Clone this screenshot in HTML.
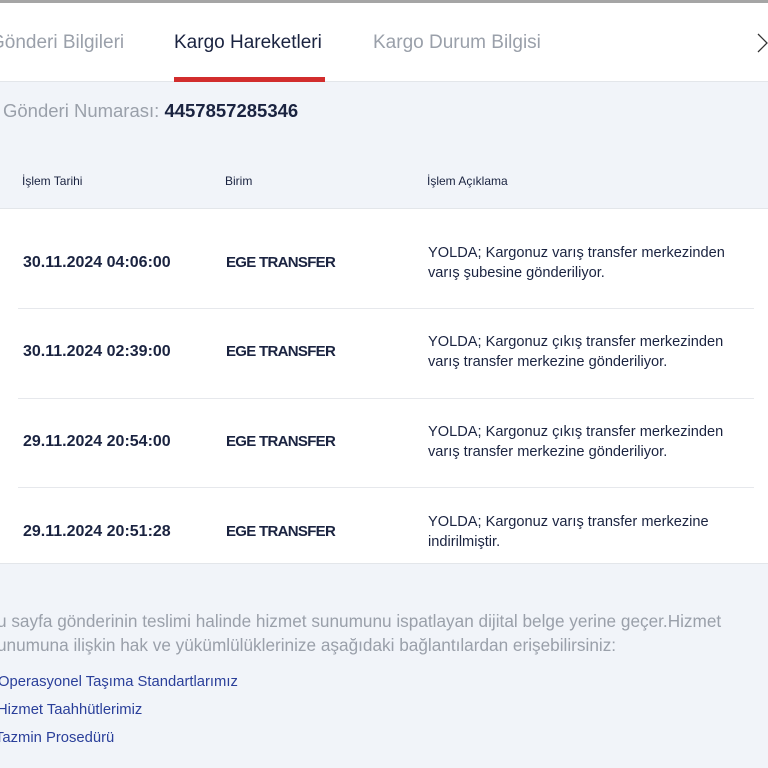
<!DOCTYPE html>
<html><head><meta charset="utf-8"><style>
*{margin:0;padding:0;box-sizing:border-box}
body{width:768px;height:768px;overflow:hidden;background:#f1f4f9;font-family:"Liberation Sans",sans-serif;position:relative;color:#1a2340}
.a{position:absolute;white-space:nowrap}
.d{font-size:16px;font-weight:bold}
.e{font-size:15px;font-weight:bold;letter-spacing:-0.7px}
.t{font-size:14.6px;line-height:20px}
</style></head><body>
<div class="a" style="left:0;top:0;width:768px;height:3px;background:#a5a5a5"></div>
<div class="a" style="left:0;top:3px;width:768px;height:79px;background:#fff;border-bottom:1px solid #e3e6ea"></div>
<div class="a" style="left:-10px;top:32px;font-size:19px;color:#9aa0aa">Gönderi Bilgileri</div>
<div class="a" style="left:174px;top:32px;font-size:19px;color:#1a2340">Kargo Hareketleri</div>
<div class="a" style="left:373px;top:32px;font-size:19px;color:#9aa0aa">Kargo Durum Bilgisi</div>
<div class="a" style="left:174px;top:77px;width:151px;height:5px;background:#d22d2d"></div>
<svg class="a" style="left:756px;top:32px" width="14" height="22"><path d="M2 2L11 11L2 20" fill="none" stroke="#333" stroke-width="1.3"/></svg>
<div class="a" style="left:3px;top:100px;font-size:18.5px;color:#9aa0aa">Gönderi Numarası: <b style="color:#1a2340">4457857285346</b></div>
<div class="a" style="left:22px;top:174px;font-size:12px">İşlem Tarihi</div>
<div class="a" style="left:225px;top:174px;font-size:12px">Birim</div>
<div class="a" style="left:427px;top:174px;font-size:12px">İşlem Açıklama</div>
<div class="a" style="left:0;top:208px;width:768px;height:356px;background:#fff;border-top:1px solid #e3e6ea;border-bottom:1px solid #e3e6ea"></div>
<div class="a" style="left:18px;top:308px;width:736px;height:1px;background:#e6e8ec"></div>
<div class="a" style="left:18px;top:398px;width:736px;height:1px;background:#e6e8ec"></div>
<div class="a" style="left:18px;top:487px;width:736px;height:1px;background:#e6e8ec"></div>
<div class="a d" style="left:23px;top:254px">30.11.2024 04:06:00</div>
<div class="a e" style="left:226px;top:254px">EGE TRANSFER</div>
<div class="a t" style="left:428px;top:243px">YOLDA; Kargonuz varış transfer merkezinden<br>varış şubesine gönderiliyor.</div>
<div class="a d" style="left:23px;top:343px">30.11.2024 02:39:00</div>
<div class="a e" style="left:226px;top:343px">EGE TRANSFER</div>
<div class="a t" style="left:428px;top:332px">YOLDA; Kargonuz çıkış transfer merkezinden<br>varış transfer merkezine gönderiliyor.</div>
<div class="a d" style="left:23px;top:433px">29.11.2024 20:54:00</div>
<div class="a e" style="left:226px;top:433px">EGE TRANSFER</div>
<div class="a t" style="left:428px;top:422px">YOLDA; Kargonuz çıkış transfer merkezinden<br>varış transfer merkezine gönderiliyor.</div>
<div class="a d" style="left:23px;top:523px">29.11.2024 20:51:28</div>
<div class="a e" style="left:226px;top:523px">EGE TRANSFER</div>
<div class="a t" style="left:428px;top:512px">YOLDA; Kargonuz varış transfer merkezine<br>indirilmiştir.</div>
<div class="a" style="left:-3px;top:609px;font-size:17.2px;line-height:24px;color:#9aa0aa">u sayfa gönderinin teslimi halinde hizmet sunumunu ispatlayan dijital belge yerine geçer.Hizmet<br>unumuna ilişkin hak ve yükümlülüklerinize aşağıdaki bağlantılardan erişebilirsiniz:</div>
<div class="a" style="left:-2px;top:674px;font-size:14.8px;color:#2a3f9a">Operasyonel Taşıma Standartlarımız</div>
<div class="a" style="left:-3px;top:702px;font-size:14.8px;color:#2a3f9a">Hizmet Taahhütlerimiz</div>
<div class="a" style="left:-5px;top:730px;font-size:14.8px;color:#2a3f9a">Tazmin Prosedürü</div>
</body></html>
